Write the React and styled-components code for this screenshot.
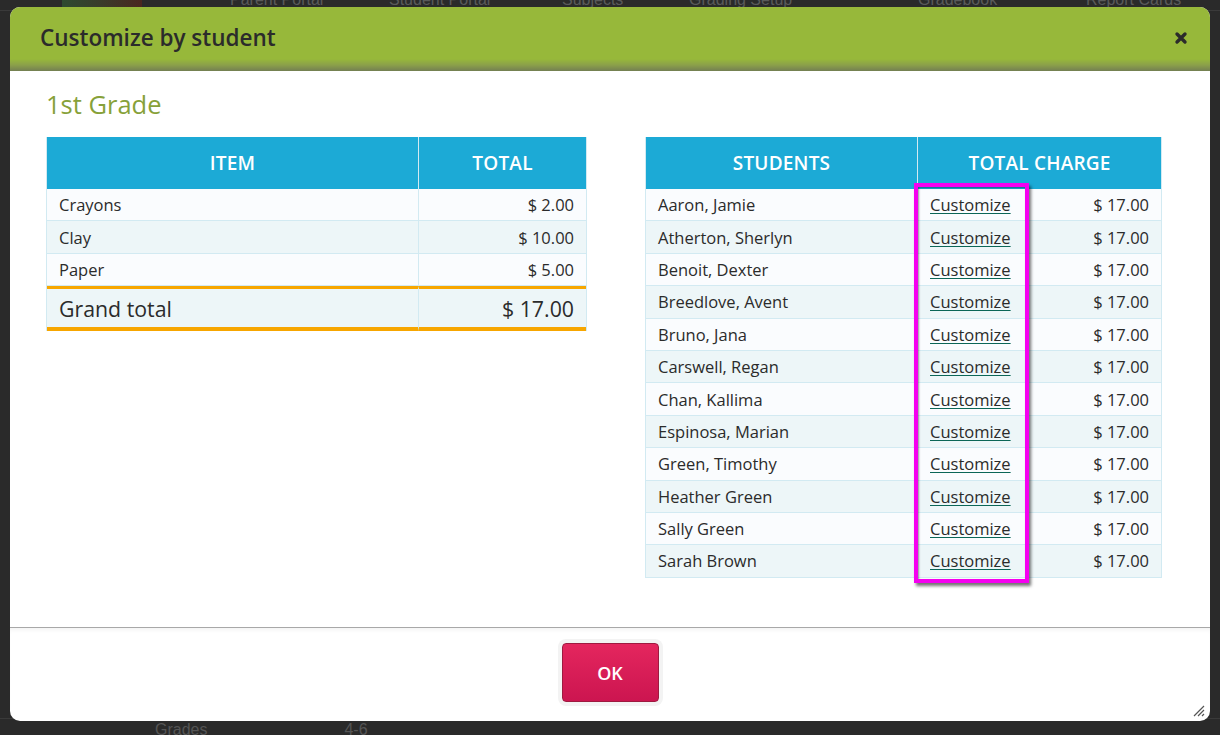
import React from 'react'
import styled, { createGlobalStyle } from 'styled-components'

const GlobalStyle = createGlobalStyle`
  html, body {
    margin: 0;
    padding: 0;
    background: #2a2a2a;
    font-family: "Open Sans", Lato, sans-serif;
    overflow: hidden;
  }
`

const items = [
  { name: 'Crayons', total: '$ 2.00' },
  { name: 'Clay', total: '$ 10.00' },
  { name: 'Paper', total: '$ 5.00' }
]

const students = [
  'Aaron, Jamie',
  'Atherton, Sherlyn',
  'Benoit, Dexter',
  'Breedlove, Avent',
  'Bruno, Jana',
  'Carswell, Regan',
  'Chan, Kallima',
  'Espinosa, Marian',
  'Green, Timothy',
  'Heather Green',
  'Sally Green',
  'Sarah Brown'
]

const navLinks = [
  { label: 'Parent Portal', x: 230 },
  { label: 'Student Portal', x: 389 },
  { label: 'Subjects', x: 562 },
  { label: 'Grading Setup', x: 689 },
  { label: 'Gradebook', x: 918 },
  { label: 'Report Cards', x: 1086 }
]

const Page = styled.div`
  position: relative;
  width: 1220px;
  height: 735px;
  overflow: hidden;
  background: #2a2a2a;
`

const Backdrop = styled.div`
  height: 100%;
  display: flex;
  flex-direction: column;
  justify-content: space-between;
  color: #5a5a5a;
  font-family: "Liberation Sans Narrow", "Liberation Sans", sans-serif;
  font-size: 16px;
`

const NavBar = styled.div`
  display: flex;
  height: 22px;
  margin-top: -12px;
  border-bottom: 1px solid #3a3a3a;
`

const NavLogo = styled.div`
  width: 80px;
  height: 22px;
  margin-left: 62px;
  background: linear-gradient(90deg, #2e4a30, #3a3a2a 50%, #4a2620);
`

const NavLink = styled.span`
  position: absolute;
  top: -9px;
`

const BottomRow = styled.div`
  display: flex;
  height: 16px;
  border-top: 1px solid #3a3a3a;
  padding-left: 155px;
  gap: 137px;
  line-height: 22px;
  color: #555;
`

const Dialog = styled.div`
  position: absolute;
  left: 10px;
  top: 7px;
  width: 1200px;
  height: 714px;
  background: #fff;
  border-radius: 10px;
  overflow: hidden;
  display: flex;
  flex-direction: column;
`

const Header = styled.div`
  height: 64px;
  flex: none;
  box-sizing: border-box;
  padding: 0 22px 4px 30px;
  display: flex;
  align-items: center;
  justify-content: space-between;
  background: linear-gradient(180deg, #97b83a 0, #97b83a 52px, #8ba04a 58px, #737f52 64px);
`

const Title = styled.h2`
  margin: 0;
  font-size: 22.5px;
  font-weight: 600;
  color: #2b2b2b;
`

const CloseButton = styled.button`
  border: none;
  background: none;
  padding: 0;
  width: 14px;
  height: 14px;
  margin-top: 2px;
  display: flex;
  cursor: pointer;
`

const Body = styled.div`
  flex: 1;
  padding: 18px 48px 0 36px;
`

const GradeTitle = styled.h3`
  margin: 0 0 18px;
  font-size: 25.5px;
  font-weight: 400;
  color: #87a139;
  line-height: 30px;
`

const Columns = styled.div`
  display: flex;
  justify-content: space-between;
  align-items: flex-start;
`

const Table = styled.div`
  position: relative;
  width: ${p => p.$width}px;
  display: grid;
  grid-template-columns: ${p => p.$cols};
  border: 1px solid #d2eaf2;
  border-top: none;
  border-bottom: none;
  font-size: 16.5px;
  color: #2b2b2b;
`

const HeadCell = styled.div`
  height: 52px;
  display: flex;
  align-items: center;
  justify-content: center;
  background: #1caad6;
  color: #fff;
  font-weight: 600;
  font-size: 19px;
  letter-spacing: 0.2px;
  text-transform: uppercase;
  border-left: ${p => (p.$first ? 'none' : '1px solid #d2eaf2')};
`

const Cell = styled.div`
  height: 32.4px;
  box-sizing: border-box;
  display: flex;
  align-items: center;
  justify-content: ${p => (p.$right ? 'flex-end' : 'flex-start')};
  padding: 0 12px;
  background: ${p => (p.$odd ? '#edf6f8' : '#fafcfe')};
  border-bottom: 1px solid #d2eaf2;
  border-left: ${p => (p.$first ? 'none' : '1px solid #d2eaf2')};
`

const TotalCell = styled(Cell)`
  height: 45px;
  font-size: 21.3px;
  background: #edf6f8;
  border-top: 3px solid #f7a600;
  border-bottom: 4px solid #f7a600;
`

const ChargeCell = styled(Cell)`
  justify-content: space-between;
`

const Link = styled.a`
  color: #2b2b2b;
  text-decoration: underline;
  text-decoration-color: #0b6657;
  text-underline-offset: 2px;
  cursor: pointer;
`

const Highlight = styled.div`
  position: absolute;
  left: 268px;
  top: 46px;
  width: 115px;
  height: 400px;
  box-sizing: border-box;
  border: 4px solid #f500f0;
  box-shadow: 2px 3px 3px rgba(0, 0, 0, 0.55), inset 1px 1px 2px rgba(0, 0, 0, 0.4);
  pointer-events: none;
`

const Footer = styled.div`
  height: 94px;
  flex: none;
  border-top: 1px solid #a8a8a8;
  box-shadow: inset 0 4px 4px -2px rgba(0, 0, 0, 0.05);
  display: flex;
  justify-content: center;
  padding-top: 15px;
  box-sizing: border-box;
  position: relative;
`

const OkButton = styled.button`
  width: 97px;
  height: 59px;
  box-sizing: border-box;
  border: 1px solid #9e1a40;
  border-radius: 4px;
  background: linear-gradient(180deg, #e4265e, #cc1550);
  color: #fff;
  font-family: "Open Sans", sans-serif;
  font-size: 18px;
  font-weight: 600;
  box-shadow: 0 0 0 4px #f3f3f3;
  cursor: pointer;
`

const ResizeHandle = styled.svg`
  position: absolute;
  right: 4px;
  bottom: 3px;
`

const App = () => (
  <Page>
    <GlobalStyle />
    <Backdrop>
      <NavBar>
        <NavLogo />
        {navLinks.map(n => (
          <NavLink key={n.label} style={{ left: n.x }}>{n.label}</NavLink>
        ))}
      </NavBar>
      <BottomRow>
        <span>Grades</span>
        <span>4-6</span>
      </BottomRow>
    </Backdrop>

    <Dialog>
      <Header>
        <Title>Customize by student</Title>
        <CloseButton aria-label="Close">
          <svg width="14" height="14" viewBox="0 0 14 14">
            <path d="M3 3 L11 11 M11 3 L3 11" stroke="#2b2b2b" strokeWidth="3.4" strokeLinecap="round" />
          </svg>
        </CloseButton>
      </Header>

      <Body>
        <GradeTitle>1st Grade</GradeTitle>
        <Columns>
          <Table $width={539} $cols="371px 1fr">
            <HeadCell $first>Item</HeadCell>
            <HeadCell>Total</HeadCell>
            {items.map((it, i) => (
              <React.Fragment key={it.name}>
                <Cell $first $odd={i % 2 === 1}>{it.name}</Cell>
                <Cell $right $odd={i % 2 === 1}>{it.total}</Cell>
              </React.Fragment>
            ))}
            <TotalCell $first>Grand total</TotalCell>
            <TotalCell $right>$ 17.00</TotalCell>
          </Table>

          <Table $width={515} $cols="271px 1fr">
            <HeadCell $first>Students</HeadCell>
            <HeadCell>Total Charge</HeadCell>
            {students.map((s, i) => (
              <React.Fragment key={s}>
                <Cell $first $odd={i % 2 === 1}>{s}</Cell>
                <ChargeCell $odd={i % 2 === 1}>
                  <Link>Customize</Link>
                  <span>$ 17.00</span>
                </ChargeCell>
              </React.Fragment>
            ))}
            <Highlight />
          </Table>
        </Columns>
      </Body>

      <Footer>
        <OkButton>OK</OkButton>
        <ResizeHandle width="14" height="14" viewBox="0 0 14 14">
          <path d="M2 12 L12 2 M6 12 L12 6 M10 12 L12 10" stroke="#555" strokeWidth="1.2" />
        </ResizeHandle>
      </Footer>
    </Dialog>
  </Page>
)

export default App
